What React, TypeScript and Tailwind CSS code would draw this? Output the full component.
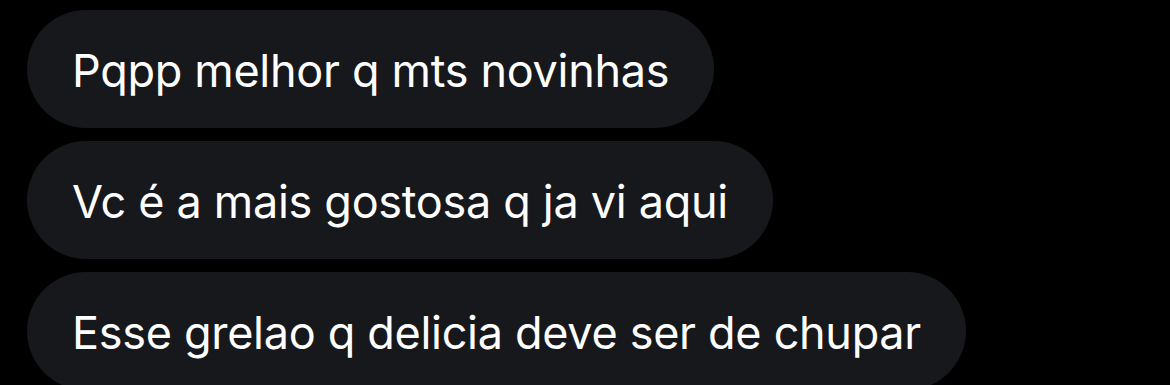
const messages = [
  'Pqpp melhor q mts novinhas',
  'Vc é a mais gostosa q ja vi aqui',
  'Esse grelao q delicia deve ser de chupar',
]

export default function App() {
  return (
    <div className="h-[385px] w-[1170px] overflow-hidden bg-black pt-[10px] pl-[27px]">
      <div className="flex flex-col items-start gap-[13px]">
        {messages.map((m) => (
          <div
            key={m}
            className="flex h-[118px] shrink-0 items-center rounded-full bg-[#16181c] px-[45px] pt-[3px] text-[45px] tracking-[-0.3px] text-white"
            style={{ fontFamily: 'Inter, "Noto Sans", sans-serif' }}
          >
            {m}
          </div>
        ))}
      </div>
    </div>
  )
}
